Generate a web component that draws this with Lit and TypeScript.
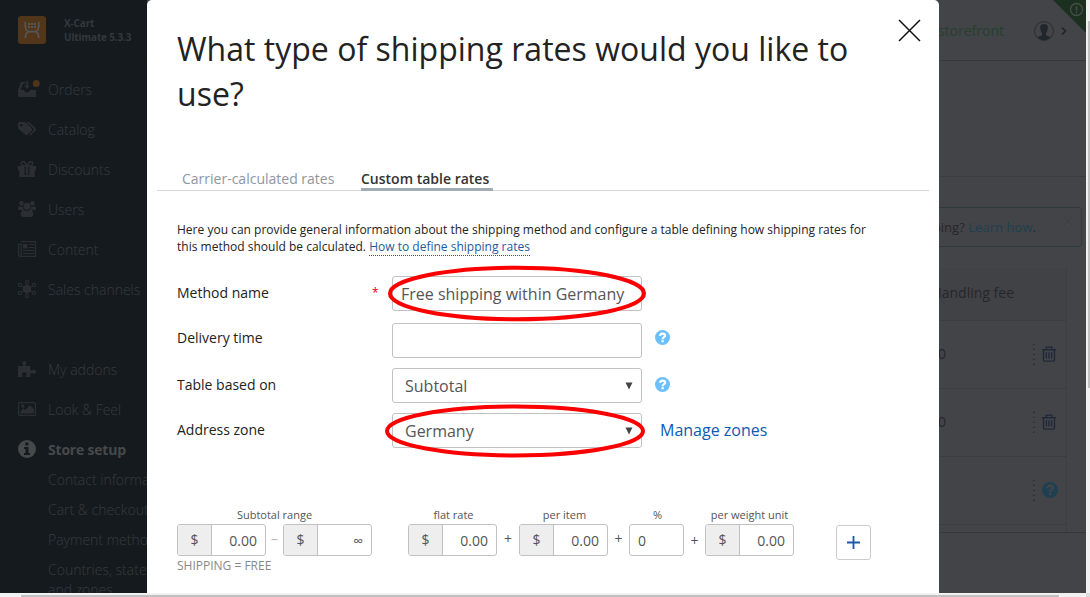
import { LitElement, html, svg, css } from "lit";
import { customElement, property } from "lit/decorators.js";

const glyphs: Record<string, unknown> = {
  orders: svg`<path d="M4 2h3v1.600H5.200L2.800 10H6l1 2.200h4L12 10h6v7H0v-7L3 2z"/><path d="M8.200 1h1.800v4.500h2L9 9 6 5.500h2.200z"/><circle cx="18.200" cy="3.500" r="3.500" fill="#4f3518"/>`,
  catalog: svg`<path fill-rule="evenodd" d="M0 3.500C0 2.600.600 2 1.500 2H6c.800 0 1.800.400 2.400 1l5.400 5.300c.6.600.6 1.500 0 2.100l-4.300 4.400c-.6.600-1.500.6-2.100 0L1 9.400C.400 8.800 0 7.800 0 7zM3.200 4a1.300 1.300 0 1 0 0 2.600 1.300 1.300 0 0 0 0-2.600z"/><path d="M8.200 2h1.600c.8 0 1.800.4 2.400 1l5.300 5.300c.6.600.6 1.500 0 2.100l-4.300 4.400c-.9.800-1.400.600-2-.1l4.100-4.300c.6-.6.6-1.500 0-2.100z"/>`,
  discounts: svg`<path d="M0 6h18v4.200H16.800V16c0 .6-.4 1-1 1H2.200c-.6 0-1-.4-1-1v-5.800H0z"/><path d="M6.600 6h4.800v9H6.600z" fill="#151a1e"/><path d="M7.800 6h2.400v8.500H7.800z"/><path fill="none" stroke="currentColor" stroke-width="1.600" d="M9 6 7 2.700C6 1 3 1.500 3.200 3.700 3.400 6 6 5.800 9 6c3-.2 5.600 0 5.800-2.300C15 1.500 12 1 11 2.700z"/>`,
  users: svg`<circle cx="3.500" cy="3.400" r="2.300"/><circle cx="14.500" cy="3.400" r="2.300"/><path d="M2 6.400c1 .8 2.200.8 3.200.1-.5 1.300-.1 2.700.8 3.500H1.500C.6 10 0 9.500 0 8.700 0 7.500.5 6 2 6.400zM16 6.400c-1 .8-2.200.8-3.200.1.5 1.300.1 2.700-.8 3.500h4.500c.9 0 1.500-.5 1.500-1.300 0-1.200-.5-2.700-2-2.300z"/><circle cx="9" cy="6.200" r="3.500"/><path d="M5.500 9.500c2 1.800 5 1.800 7 0 2 .2 2.700 2.500 2.700 5 0 1.500-1 2.500-2.500 2.500H5.300c-1.500 0-2.500-1-2.500-2.500 0-2.500.7-4.800 2.700-5z"/>`,
  content: svg`<path fill="none" stroke="currentColor" stroke-width="1.200" d="M3.200 1.600h14.200v14.800H2.200C1.200 16.400.6 15.800.6 15V4h2.600v10.800c0 .8-.4 1.400-1 1.600"/><path d="M5 4h4.500v4.500H5zM11 4h5v1h-5zM11 7h5v1h-5zM5 10h11v1H5zM5 13h11v1H5z"/>`,
  channels: svg`<circle cx="9" cy="9" r="4.200"/><g fill="none" stroke="currentColor" stroke-width="1.100"><circle cx="9" cy="1.900" r="1.600"/><circle cx="9" cy="16.100" r="1.600"/><circle cx="2" cy="5" r="1.600"/><circle cx="16" cy="5" r="1.600"/><circle cx="2" cy="13" r="1.600"/><circle cx="16" cy="13" r="1.600"/><path d="M9 3.500v11M3.500 6l11 6M14.500 6l-11 6"/></g>`,
  addons: svg`<path d="M0 6h4.500c.8-.2.900-.8.400-1.600C3.800 2.600 4.800 1 6.300 1s2.500 1.600 1.400 3.400c-.5.800-.4 1.400.4 1.600h4.200v3.600c.2 1 1 1.200 1.900.7 1.800-1.100 3.800-.4 3.800 1.400s-2 2.600-3.800 1.500c-.9-.5-1.700-.2-1.900.7V17H8.300c-.5-.4-.5-1 0-1.800.6-1 .2-3-2-3s-2.600 2-2 3c.5.800.5 1.400 0 1.800H0z"/>`,
  look: svg`<rect x=".6" y="2.600" width="16.800" height="12.800" rx="1" fill="none" stroke="currentColor" stroke-width="1.200"/><circle cx="4.800" cy="6" r="1.700"/><path d="M2.500 13.500v-2.200l3-3 1.700 1.700 4.800-5 3.800 4v4.500z"/>`,
  info: svg`<circle cx="9" cy="9" r="9"/><path fill="#151a1e" d="M7.300 2.500h3.200v3H7.300zM6 7h4.500v6H12v2H6v-2h1.500V9H6z"/>`,
  help: svg`<circle cx="9" cy="9" r="9"/><path fill="none" stroke="var(--mark,#fff)" stroke-width="2.700" d="M6 7.100C6.200 4.900 7.500 4.200 9 4.200c1.800 0 3.100 1 3.100 2.500C12.100 8.600 9.200 8.500 9.200 11"/><path fill="var(--mark,#fff)" d="M7.800 12.200h2.700v2.500H7.800z"/>`,
  trash: svg`<g fill="none" stroke="currentColor" stroke-width="1.500"><path d="M1.200 4.200h15.600M5.800 4V1.200h6.400V4M2.800 4.500v11.300c0 .7.500 1.200 1.200 1.200h10c.7 0 1.200-.5 1.200-1.200V4.500M6 7v7M9 7v7M12 7v7"/></g>`,
};

@customElement("ui-icon")
class UiIcon extends LitElement {
  @property() name = "";
  @property({ type: Number }) size = 18;
  static styles = css`
    :host { display: inline-flex; flex: none; }
    svg { display: block; overflow: visible; }
  `;
  render() {
    return html`<svg width=${this.size} height=${this.size} viewBox="0 0 18 18" fill="currentColor">${glyphs[this.name]}</svg>`;
  }
}

@customElement("money-input")
class MoneyInput extends LitElement {
  @property() value = "";
  static styles = css`
    :host { display: flex; box-sizing: border-box; width: 89px; height: 32px; border: 1px solid #c1c1c1; border-radius: 3px; overflow: hidden; background: #fff; }
    .unit { width: 33px; border-right: 1px solid #c1c1c1; background: #eee; color: #555; font-size: 14px; line-height: 29px; text-align: center; }
    .value { flex: 1; padding-right: 8px; color: #555; font-size: 14px; line-height: 32px; text-align: right; }
  `;
  render() {
    return html`<span class="unit">$</span><span class="value">${this.value}</span>`;
  }
}

@customElement("side-menu")
class SideMenu extends LitElement {
  static styles = css`
    :host { display: block; width: 147px; height: 593px; overflow: hidden; background: #151a1e; color: #373b3f; }
    .brand { display: flex; height: 60px; box-sizing: border-box; padding: 16px 0 0 18px; gap: 18px; border-bottom: 1px solid #17191d; font-size: 10px; font-weight: 700; line-height: 14px; letter-spacing: -0.16px; color: #33383c; white-space: nowrap; }
    .brand svg { flex: none; }
    .items { padding-top: 9px; width: 190px; }
    .item { display: flex; align-items: center; height: 40px; padding-left: 18px; gap: 12px; font-size: 14px; font-weight: 300; white-space: nowrap; }
    .item ui-icon { color: #2b2f33; }
    .spaced { margin-top: 40px; }
    .active { margin-bottom: -4px; font-weight: 700; letter-spacing: -0.2px; color: #46494c; }
    .active ui-icon { color: #46494c; }
    .sub { padding: 5px 0 5px 48px; font-size: 14px; font-weight: 300; line-height: 20px; white-space: nowrap; }
  `;
  render() {
    const items = [
      ["orders", "Orders", ""], ["catalog", "Catalog", ""], ["discounts", "Discounts", ""],
      ["users", "Users", ""], ["content", "Content", ""], ["channels", "Sales channels", ""],
      ["addons", "My addons", "spaced"], ["look", "Look & Feel", ""], ["info", "Store setup", "active"],
    ];
    return html`
      <div class="brand">
        <svg width="28" height="28" viewBox="0 0 28 28">
          <rect width="28" height="28" rx="3" fill="#513619" />
          <g fill="none" stroke="#55565a" stroke-width="1.700">
            <path d="M7.300 6v4c0 3 1.500 5.700 4.200 5.700h5c2.700 0 4.200-2.700 4.200-5.700V6M7.300 22c0-4 1.500-6.300 4.200-6.300h5c2.700 0 4.200 2.300 4.200 6.300" />
          </g>
          <path stroke="#55565a" stroke-width="2" stroke-dasharray="2 1" d="M10 8h8M10 11h8" />
        </svg>
        <div>X-Cart<br />Ultimate 5.3.3</div>
      </div>
      <div class="items">
        ${items.map(([icon, label, cls]) => html`<div class="item ${cls}"><ui-icon name=${icon}></ui-icon>${label}</div>`)}
        <div class="sub">Contact information</div>
        <div class="sub">Cart &amp; checkout</div>
        <div class="sub">Payment methods</div>
        <div class="sub">Countries, states<br />and zones</div>
      </div>
    `;
  }
}

@customElement("page-backdrop")
class PageBackdrop extends LitElement {
  static styles = css`
    :host { display: block; position: relative; height: 593px; overflow: hidden; background: #434447; color: #25272b; font-size: 14px; }
    .top { display: flex; justify-content: flex-end; align-items: center; gap: 7px; height: 61px; padding: 1px 19px 0 0; box-sizing: border-box; border-bottom: 1px solid #35373a; }
    .store { margin-right: 23px; color: #26402f; }
    .corner { position: absolute; top: 0; right: 0; }
    .band { height: 115px; border-bottom: 1px solid #3a3c3f; }
    .main { height: 356px; box-sizing: border-box; padding-top: 30px; border-bottom: 1px solid #35373a; }
    .notice { display: flex; justify-content: flex-end; height: 40px; box-sizing: border-box; margin-right: 4px; padding-right: 8px; border: 1px solid #30393c; border-radius: 3px; line-height: 38px; }
    .notice .link { color: #203f50; }
    .notice svg { margin: 8px 0 0 27px; }
    .text { font-size: 13px; letter-spacing: 0.05px; }
    .table { margin: 21px 19px 0 0; border-right: 1px solid #3d3e42; height: 264px; }
    .head { height: 52px; padding-right: 52px; background: #414245; border-bottom: 1px solid #3d3e41; line-height: 50px; text-align: right; }
    .row { display: flex; align-items: center; justify-content: flex-end; box-sizing: border-box; height: 68px; padding: 0 9px 2px 0; border-bottom: 1px solid #3b3c40; }
    .dots { margin: 0 6px 0 86px; }
    .row ui-icon { --mark: #434447; color: #20283a; }
    .row .help { color: #1e4052; margin-right: -1px; }
    .row .dots.wide { margin-right: 7px; }
  `;
  private dots(wide = false) {
    return html`<svg class="dots ${wide ? "wide" : ""}" width="3" height="24" fill="#292b2e">
      ${[2, 7, 12, 17, 22].map((y) => svg`<path d="M2.500 ${y - 1}v2h-2z"/>`)}
    </svg>`;
  }
  render() {
    return html`
      <div class="top">
        <span class="store">View storefront</span>
        <svg width="20" height="20" viewBox="0 0 20 20"><circle cx="10" cy="10" r="9.400" fill="none" stroke="#282d32" /><path fill="#20272c" d="M6.200 5.500C6.500 2 13.500 2 13.800 5.500c.2 3-.6 5.300-1.800 6.500v2c0 1 3 1 4.200 2.200C13 20.200 7 20.200 3.800 16.200 5 15 8 15 8 14v-2c-1.200-1.200-2-3.500-1.800-6.500z" /></svg>
        <svg width="6" height="10" viewBox="0 0 6 10"><path d="m1 1.500 3.500 3.500L1 8.500" fill="none" stroke="#202226" stroke-width="1.500" /></svg>
      </div>
      <svg class="corner" width="33" height="33"><path d="M0 0h33v33z" fill="#1c3020" /><circle cx="23.500" cy="9.500" r="6" fill="none" stroke="#484e46" stroke-width="1.300" /><path d="M23.500 6v4.500M23.500 11.700v1.600" stroke="#484e46" stroke-width="1.500" /></svg>
      <div class="band"></div>
      <div class="main">
        <div class="notice">
          <span class="text">shipping? <span class="link">Learn how</span>.</span>
          <svg width="10" height="10" viewBox="0 0 10 10"><path d="m1 1 8 8M9 1 1 9" stroke="#383f43" /></svg>
        </div>
        <div class="table">
          <div class="head">Handling fee</div>
          <div class="row">0.00${this.dots()}<ui-icon name="trash" size="16"></ui-icon></div>
          <div class="row">0.00${this.dots()}<ui-icon name="trash" size="16"></ui-icon></div>
          <div class="row">${this.dots(true)}<ui-icon class="help" name="help" size="16"></ui-icon></div>
        </div>
      </div>
    `;
  }
}

@customElement("rates-dialog")
class RatesDialog extends LitElement {
  static styles = css`
    :host { display: block; box-sizing: border-box; width: 792px; height: 593px; padding: 26px 10px 0; border-radius: 5px 5px 0 0; background: #fff; color: #222; font-size: 14px; overflow: hidden; }
    .close { position: absolute; right: 18px; top: 19px; }
    h1 { margin: 0 60px 0 20px; font-size: 32px; font-weight: 400; line-height: 45px; letter-spacing: 0.02px; color: #222; }
    .tabs { display: flex; align-items: flex-end; margin-top: 51px; height: 23px; padding-left: 25px; border-bottom: 1px solid #d5d5d5; line-height: 24px; }
    .tab { width: 179px; height: 23px; color: #8c979e; white-space: nowrap; }
    .on { box-sizing: content-box; width: 132px; height: 21px; margin-bottom: -1px; border-bottom: 3px solid #a1acb3; color: #333; font-weight: 600; }
    .intro { margin: 30px 0 0 20px; font-size: 12px; line-height: 17px; letter-spacing: 0.008px; white-space: nowrap; }
    .intro a { border-bottom: 1px dotted #1e5aa0; color: #1e5aa0; }
    .form { display: grid; grid-template-columns: 195px 20px 250px auto; grid-template-rows: 47px 45px 45px 35px; margin: 21px 0 0 20px; }
    .label { line-height: 34px; }
    .up { line-height: 30px; }
    .req { color: #e00; font-size: 12px; line-height: 34px; }
    .field { display: flex; align-items: center; justify-content: space-between; box-sizing: border-box; height: 35px; padding: 0 8px; border: 1px solid #c1c1c1; border-radius: 3px; color: #555; font-size: 16px; white-space: nowrap; }
    .select { padding: 0 8px 0 12px; }
    .help { margin: 7px 0 0 13px; color: #6cbfff; }
    .help.second { margin-top: 9px; }
    .zones { margin-left: 18px; color: #0d5ab2; font-size: 16px; line-height: 34px; }
    .rates { display: grid; grid-template-columns: 89px 17px 89px 36px 89px 22px 89px 21px 55px 21px 89px 42px 35px; grid-template-rows: 18px 32px; margin: 58px 0 0 20px; }
    .cap { color: #555; font-size: 11px; line-height: 17px; text-align: center; white-space: nowrap; }
    .range { grid-column: 1 / 4; }
    .c5 { grid-column: 5; } .c6 { grid-column: 6; } .c7 { grid-column: 7; } .c8 { grid-column: 8; }
    .c9 { grid-column: 9; } .c10 { grid-column: 10; } .c11 { grid-column: 11; }
    .cap.c5, .cap.c7, .cap.c9 { padding-left: 2px; }
    .op { grid-row: 2; color: #555; font-size: 14px; line-height: 29px; text-align: center; }
    .dash { color: #bbb; }
    .low { line-height: 33px; }
    .percent { grid-row: 2; grid-column: 9; height: 32px; font-size: 14px; }
    money-input { grid-row: 2; }
    .add { display: flex; align-items: center; justify-content: center; grid-row: 2; grid-column: 13; box-sizing: border-box; width: 35px; height: 35px; margin-top: 1px; border: 1px solid #ccc; border-radius: 3px; }
    .free { margin: 1px 0 0 20px; color: #888; font-size: 12px; line-height: 17px; }
    .rings { position: absolute; left: 236px; top: 262px; pointer-events: none; }
  `;
  render() {
    const arrow = html`<svg width="8" height="8"><path d="M.5.500h7l-3.500 7z" fill="#444" /></svg>`;
    return html`
      <svg class="close" width="23" height="23"><path d="m1 1 21 21M22 1 1 22" stroke="#111" stroke-width="1.500" /></svg>
      <h1>What type of shipping rates would you like to use?</h1>
      <div class="tabs"><span class="tab">Carrier-calculated rates</span><span class="tab on">Custom table rates</span></div>
      <div class="intro">
        Here you can provide general information about the shipping method and configure a table defining how shipping rates for<br />
        this method should be calculated. <a>How to define shipping rates</a>
      </div>
      <div class="form">
        <span class="label">Method name</span><span class="req">*</span><span class="field">Free shipping within Germany</span><span></span>
        <span class="label up">Delivery time</span><span></span><span class="field"></span><ui-icon class="help" name="help" size="15"></ui-icon>
        <span class="label">Table based on</span><span></span><span class="field select">Subtotal ${arrow}</span><ui-icon class="help second" name="help" size="15"></ui-icon>
        <span class="label">Address zone</span><span></span><span class="field select">Germany ${arrow}</span><span class="zones">Manage zones</span>
      </div>
      <div class="rates">
        <span class="cap range">Subtotal range</span><span class="cap c5">flat rate</span><span class="cap c7">per item</span><span class="cap c9">%</span><span class="cap c11">per weight unit</span>
        <money-input value="0.00"></money-input><span class="op dash">–</span><money-input value="∞"></money-input>
        <money-input class="c5" value="0.00"></money-input><span class="op c6">+</span>
        <money-input class="c7" value="0.00"></money-input><span class="op c8">+</span>
        <span class="field percent">0</span><span class="op low c10">+</span>
        <money-input class="c11" value="0.00"></money-input>
        <span class="add"><svg width="13" height="13"><path d="M6.500 0v13M0 6.500h13" stroke="#1b57a6" stroke-width="1.800" /></svg></span>
      </div>
      <div class="free">SHIPPING = FREE</div>
      <svg class="rings" width="266" height="200" fill="none" stroke="#fb0000" stroke-width="4">
        <ellipse cx="134" cy="31.500" rx="127" ry="25.700" />
        <ellipse cx="132" cy="169" rx="128" ry="24.500" />
      </svg>
    `;
  }
}

@customElement("app-root")
class AppRoot extends LitElement {
  static styles = css`
    :host { display: grid; position: relative; grid-template-columns: 147px 939px 4px; grid-template-rows: 593px 4px; width: 1090px; height: 597px; overflow: hidden; font-family: "Open Sans", "Noto Sans", sans-serif; }
    rates-dialog { position: absolute; left: 147px; top: 0; }
    .vbar { box-sizing: border-box; padding: 21px 0 0 2px; background: #f1f1f1; }
    .vthumb { height: 367px; background: #c1c1c1; }
    .hbar { box-sizing: border-box; grid-column: 1 / 3; padding: 2px 27px 0 21px; background: #f1f1f1; }
    .hthumb { height: 2px; background: #c1c1c1; }
    .nook { background: #dcdcdc; }
  `;
  render() {
    return html`
      <side-menu></side-menu>
      <page-backdrop></page-backdrop>
      <div class="vbar"><div class="vthumb"></div></div>
      <div class="hbar"><div class="hthumb"></div></div>
      <div class="nook"></div>
      <rates-dialog></rates-dialog>
    `;
  }
}
